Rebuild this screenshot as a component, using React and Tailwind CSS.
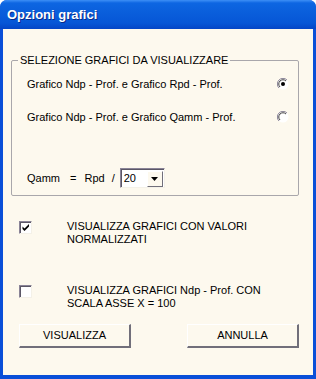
import React from 'react';

function Radio({ checked }) {
  return (
    <svg width="12" height="12" viewBox="0 0 12 12" className="shrink-0">
      <circle cx="6" cy="6" r="5.5" fill="#ffffff" />
      <path d="M10 2 A5.5 5.5 0 0 0 2 10" fill="none" stroke="#8a8497" strokeWidth="1" />
      <path d="M9 3 A4.2 4.2 0 0 0 3 9" fill="none" stroke="#404040" strokeWidth="1" />
      {checked && <circle cx="6" cy="6" r="2" fill="#000000" />}
    </svg>
  );
}

function Checkbox({ checked }) {
  return (
    <div className="w-[13px] h-[13px] shrink-0 bg-white border-t border-l border-t-[#8a8497] border-l-[#8a8497] border-r border-b border-r-[#f4f1e8] border-b-[#f4f1e8]">
      <div className="w-full h-full border-t border-l border-t-[#5b5766] border-l-[#5b5766]">
        {checked && (
          <svg width="10" height="10" viewBox="0 0 10 10">
            <path d="M1.5 3.5 L3.5 5.5 L8 1 L8 3.5 L3.5 8 L1.5 6 Z" fill="#000" />
          </svg>
        )}
      </div>
    </div>
  );
}

function Button({ children }) {
  return (
    <button className="w-[112px] h-[24px] bg-[#fdf9ee] border-t border-l border-t-white border-l-white border-r-2 border-b-2 border-r-[#716f7a] border-b-[#716f7a] text-[11px] text-black">
      {children}
    </button>
  );
}

export default function App() {
  return (
    <div className="w-[316px] h-[379px] flex flex-col bg-[#0a4fd8] rounded-t-[7px] overflow-hidden font-['Liberation_Sans',Arial,sans-serif] text-[11px] text-black">
      {/* Title bar */}
      <div className="h-[29px] shrink-0 flex items-center pl-[7px] bg-[linear-gradient(to_bottom,#3d8ff6_0px,#0d66e2_3px,#0a5fdc_40%,#0656d6_80%,#0445c6_100%)]">
        <span className="font-bold text-[13px] text-white [text-shadow:1px_1px_0_#0a2a8a]">Opzioni grafici</span>
      </div>

      {/* Body */}
      <div className="flex-1 mx-[3px] mb-[4px] bg-[#fdf9ee] flex flex-col">
        <fieldset className="ml-[8px] mt-[24px] w-[288px] border border-[#a9a7ab] rounded-[2px] pl-[15px] pr-[9px] pb-[7px]">
          <legend className="-ml-[9px] px-[2px] leading-[14px]">SELEZIONE GRAFICI DA VISUALIZZARE</legend>
          <div className="flex items-center justify-between h-[16px] mt-[9px]">
            <span>Grafico Ndp - Prof. e Grafico Rpd - Prof.</span>
            <Radio checked />
          </div>
          <div className="flex items-center justify-between h-[16px] mt-[17px]">
            <span>Grafico Ndp - Prof. e Grafico Qamm - Prof.</span>
            <Radio />
          </div>
          <div className="flex items-center h-[20px] mt-[43px]">
            <span>Qamm</span>
            <span className="ml-[10px]">=</span>
            <span className="ml-[8px]">Rpd</span>
            <span className="ml-[7px]">/</span>
            <div className="ml-[5px] w-[45px] h-[20px] flex bg-white border-t border-l border-t-[#8a8497] border-l-[#8a8497] border-r border-b border-r-[#f4f1e8] border-b-[#f4f1e8]">
              <div className="flex-1 flex border-t border-l border-t-[#5b5766] border-l-[#5b5766]">
                <span className="flex-1 pl-[2px] leading-[16px]">20</span>
                <div className="w-[16px] h-[16px] m-[1px] flex items-center justify-center bg-[#fdf9ee] border-t border-l border-t-white border-l-white border-r border-b border-r-[#716f7a] border-b-[#716f7a]">
                  <svg width="7" height="4" viewBox="0 0 7 4">
                    <path d="M0 0 H7 L3.5 4 Z" fill="#000" />
                  </svg>
                </div>
              </div>
            </div>
          </div>
        </fieldset>

        <div className="flex items-start mt-[24px] ml-[16px]">
          <div className="mt-[1px]"><Checkbox checked /></div>
          <div className="ml-[35px] leading-[13px]">
            VISUALIZZA GRAFICI CON VALORI<br />NORMALIZZATI
          </div>
        </div>

        <div className="flex items-start mt-[38px] ml-[16px]">
          <div className="mt-[1px]"><Checkbox /></div>
          <div className="ml-[35px] leading-[13px]">
            VISUALIZZA GRAFICI Ndp - Prof. CON<br />SCALA ASSE X = 100
          </div>
        </div>

        <div className="flex justify-between ml-[16px] mr-[14px] mt-[14px]">
          <Button>VISUALIZZA</Button>
          <Button>ANNULLA</Button>
        </div>
      </div>
    </div>
  );
}
